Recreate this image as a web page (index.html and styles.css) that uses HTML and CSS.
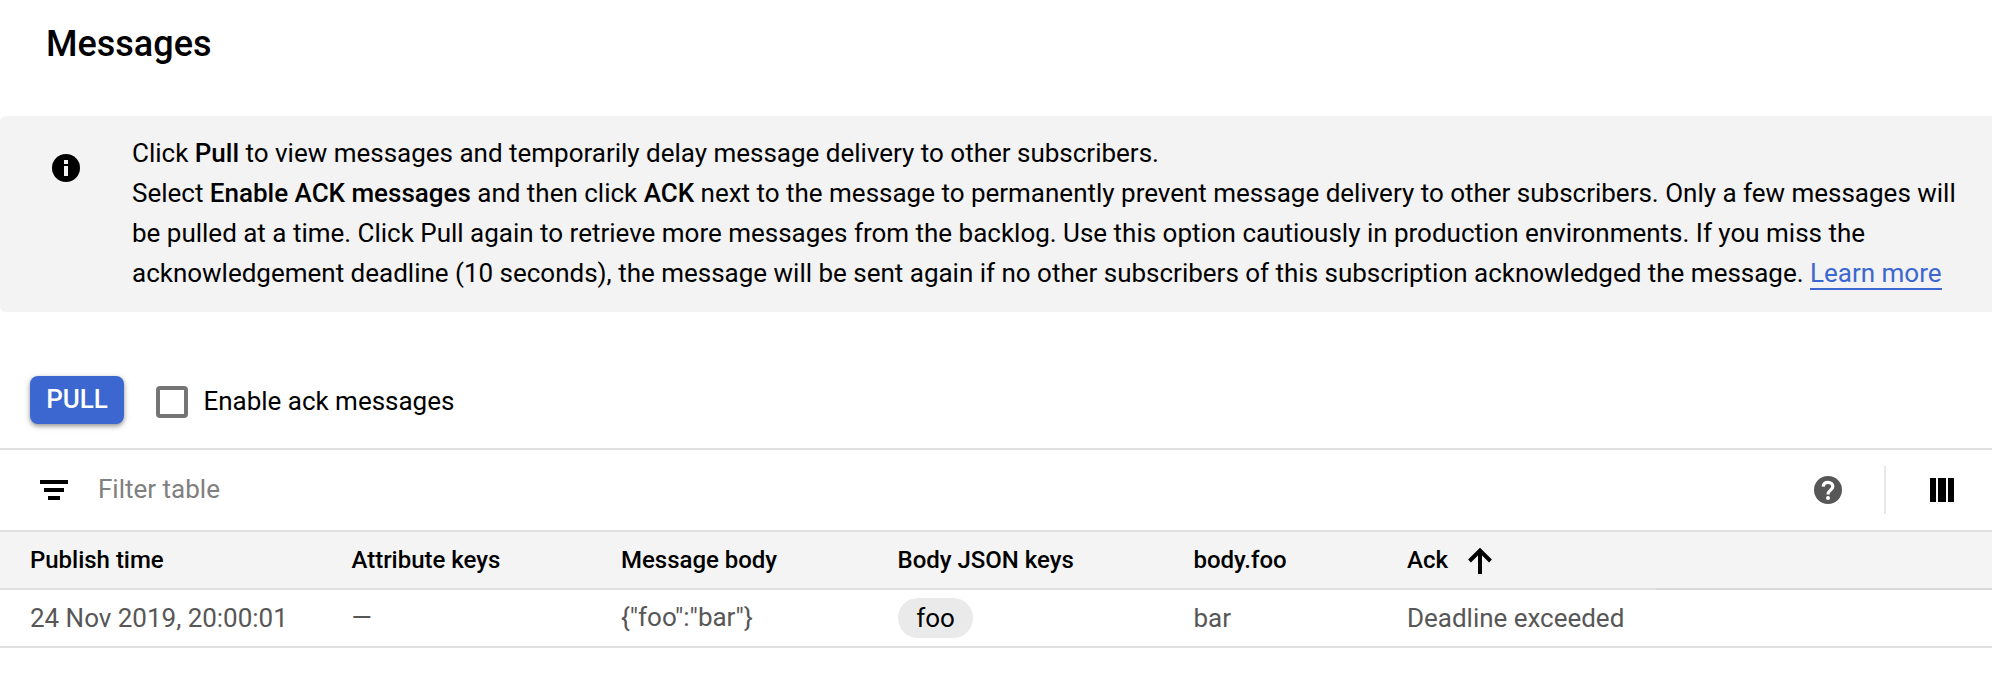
FILE: index.html
```html
<!DOCTYPE html>
<html lang="en">
<head>
<meta charset="utf-8">
<title>Messages</title>
<link rel="stylesheet" href="styles.css">
</head>
<body>
<h1 class="title">Messages</h1>
<section class="banner">
  <svg class="banner-icon" viewBox="0 0 28 28"><circle cx="14" cy="14" r="14"/><path class="mark" d="M12 6h4v4h-4zM12 12h4v10h-4z"/></svg>
  <p class="banner-text">Click <b>Pull</b> to view messages and temporarily delay message delivery to other subscribers.<br>Select <b>Enable ACK messages</b> and then click <b>ACK</b> next to the message to permanently prevent message delivery to other subscribers. Only a few messages will<br>be pulled at a time. Click Pull again to retrieve more messages from the backlog. Use this option cautiously in production environments. If you miss the<br>acknowledgement deadline (10 seconds), the message will be sent again if no other subscribers of this subscription acknowledged the message. <a class="link" href="#">Learn more</a></p>
</section>
<div class="actions">
  <button class="pull" type="button">PULL</button>
  <label class="ack"><input class="box" type="checkbox"><span class="ack-text">Enable ack messages</span></label>
</div>
<div class="filter">
  <svg class="filter-icon" viewBox="0 0 28 20"><path d="M0 0h28v4H0zM4 8h20v4H4zM8 16h12v4H8z"/></svg>
  <span class="placeholder">Filter table</span>
  <svg class="help" viewBox="0 0 28 28"><circle cx="14" cy="14" r="14"/><path class="hook" d="M9.2 10.6C9.4 8 11.3 6.4 14 6.4c2.8 0 4.8 1.7 4.8 4.1 0 3.6-4.8 3.7-4.8 7.9"/><circle class="dot" cx="14" cy="22" r="2"/></svg>
  <span class="divider"></span>
  <svg class="columns" viewBox="0 0 24 24"><path d="M0 0h6v24H0zM8 0h8v24H8zM18 0h6v24h-6z"/></svg>
</div>
<div class="row head">
  <span>Publish time</span><span>Attribute keys</span><span>Message body</span><span>Body JSON keys</span><span>body.foo</span>
  <span class="sorted">Ack<svg class="arrow" viewBox="0 0 24 28"><path d="M1.5 14L12 3.5 22.500 14M12 4v23"/></svg></span><span class="rest"></span>
</div>
<div class="row body">
  <span>24 Nov 2019, 20:00:01</span><span class="raised">—</span><span class="raised">{"foo":"bar"}</span><span><i class="chip">foo</i></span><span>bar</span><span>Deadline exceeded</span><span class="rest"></span>
</div>
</body>
</html>
```
FILE: styles.css
```css
* { box-sizing: border-box; }
body {
  margin: 0;
  background: #fff;
  color: #000;
  font-family: Roboto, sans-serif;
  font-size: 26px;
  line-height: 40px;
}
.title { margin: 0; height: 116px; padding: 24px 0 0 46px; font-size: 36px; font-weight: 500; }
.banner { display: flex; height: 196px; padding: 17px 0 0 52px; background: #f3f3f3; border-radius: 6px 0 0 6px; }
.banner-icon { flex: none; width: 28px; height: 28px; margin: 21px 52px 0 0; }
.mark { fill: #f3f3f3; }
.banner-text { margin: 0; white-space: nowrap; letter-spacing: -0.008px; }
b { font-weight: 500; }
.link { color: #3c67d0; text-decoration: none; border-bottom: 2px solid #3c67d0; }
.actions { display: flex; height: 138px; padding: 64px 0 0 30px; border-bottom: 2px solid #e0e0e0; }
.pull {
  width: 94px; height: 48px; padding: 0 0 2px; border: 0; border-radius: 8px;
  background: #3c67d0; color: #fff; font: 500 26px/46px Roboto, sans-serif;
  box-shadow: 0 2px 4px rgba(0,0,0,.35), 0 2px 8px rgba(0,0,0,.12);
}
.ack { display: flex; align-items: center; height: 52px; margin-left: 32px; gap: 15.5px; }
.ack-text { padding-bottom: 2px; letter-spacing: -0.02px; }
.box { appearance: none; width: 32px; height: 32px; margin: 0; border: 4px solid #757575; border-radius: 4px; }
.filter { display: flex; align-items: center; height: 82px; padding: 0 38px 0 40px; border-bottom: 2px solid #e0e0e0; }
.filter-icon { width: 28px; height: 20px; margin-right: 30px; }
.placeholder { flex: 1; padding-bottom: 2px; color: #808080; }
.help { width: 28px; height: 28px; fill: #575757; }
.hook { fill: none; stroke: #fff; stroke-width: 3.2; }
.dot { fill: #fff; }
.divider { width: 2px; height: 48px; margin: 0 44px 0 42px; background: #e8e8e8; }
.columns { width: 24px; height: 24px; }
.row { display: grid; grid-template-columns: 321.5px 269.5px 276.5px 296px 213.5px 249px 1fr; height: 58px; padding-left: 30px; line-height: 56px; letter-spacing: -0.02px; box-shadow: inset 0 -2px #e0e0e0; }
.row > span { border-bottom: 2px solid #e0e0e0; white-space: nowrap; }
.head { background: #f4f4f4; font-size: 24px; font-weight: 500; }
.head > .rest { border-color: #d8d8d8; }
.sorted { display: flex; }
.arrow { width: 24px; height: 28px; margin: 15px 0 0 20px; fill: none; stroke: #000; stroke-width: 4; }
.body { color: #575757; }
.raised { line-height: 54px; }
.chip { display: block; width: 75px; height: 40px; margin-top: 8px; padding-left: 1px; border-radius: 20px; background: #eaeaea; color: #000; font-style: normal; line-height: 40px; text-align: center; }
```
